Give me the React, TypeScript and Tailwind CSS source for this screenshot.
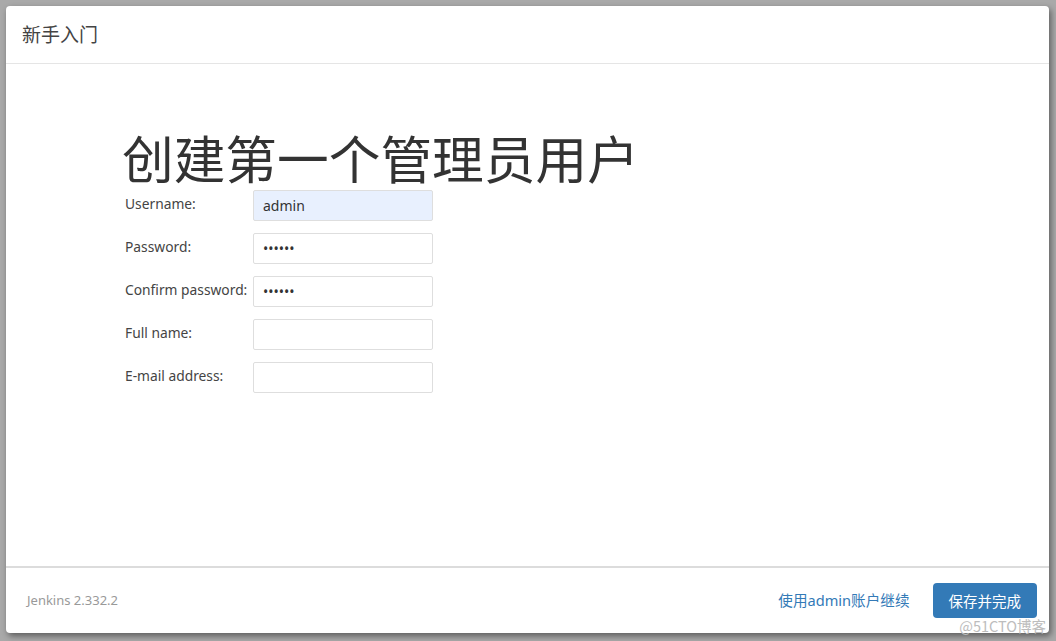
const sans = "font-['Segoe_UI','Noto_Sans','Noto_Sans_CJK_SC',sans-serif]";

const fields: { label: string; value: string; type: string; filled?: boolean }[] = [
  { label: 'Username:', value: 'admin', type: 'text', filled: true },
  { label: 'Password:', value: 'secret', type: 'password' },
  { label: 'Confirm password:', value: 'secret', type: 'password' },
  { label: 'Full name:', value: '', type: 'text' },
  { label: 'E-mail address:', value: '', type: 'text' },
];

function FieldRow({ label, value, type, filled }: (typeof fields)[number]) {
  return (
    <div className="flex items-start h-[43px]">
      <label className="w-[128px] pt-[5px] text-[13.8px] leading-[18px] text-[#444] whitespace-nowrap">{label}</label>
      <input
        type={type}
        defaultValue={value}
        readOnly
        className={`w-[180px] h-[31px] px-[9px] rounded-[2px] border border-[#dedede] text-[14px] text-[#333] outline-none ${
          filled ? 'bg-[#e8f0fe]' : 'bg-white'
        }`}
      />
    </div>
  );
}

export default function App() {
  return (
    <div className={`w-[1056px] h-[641px] bg-[#a9a9a9] p-[6px] pr-[7px] pb-[8px] ${sans}`}>
      <div className="relative h-full bg-white rounded-[4px] shadow-[2px_3px_6px_rgba(0,0,0,0.45)] flex flex-col">
        <div className="h-[58px] flex items-center px-[16px] border-b border-[#e5e5e5]">
          <h4 className="text-[19px] text-[#444] font-['Noto_Sans_CJK_SC',sans-serif]">新手入门</h4>
        </div>
        <div className="flex-1 pl-[116px] pt-[64px] border-b-2 border-[#dcdcdc]">
          <h1 className="text-[51.7px] leading-[58px] text-[#333] font-['Noto_Sans_CJK_SC',sans-serif] font-normal mb-[4px]">
            创建第一个管理员用户
          </h1>
          <div className="pl-[3px]">
            {fields.map((f) => (
              <FieldRow key={f.label} {...f} />
            ))}
          </div>
        </div>
        <div className="h-[65px] flex items-center justify-between pl-[21px] pr-[12px]">
          <span className="text-[13px] text-[#999]">Jenkins 2.332.2</span>
          <div className="flex items-center gap-[23px]">
            <a className="text-[14.6px] text-[#337ab7]">使用admin账户继续</a>
            <button className="h-[35px] px-[16px] rounded-[4px] bg-[#337ab7] text-white text-[14.5px] font-['Noto_Sans_CJK_SC',sans-serif]">
              保存并完成
            </button>
          </div>
        </div>
        <span className="absolute right-[3px] bottom-[-4px] text-[14.5px] text-[#bdbdbd] font-['Noto_Sans_CJK_SC',sans-serif]">
          @51CTO博客
        </span>
      </div>
    </div>
  );
}
